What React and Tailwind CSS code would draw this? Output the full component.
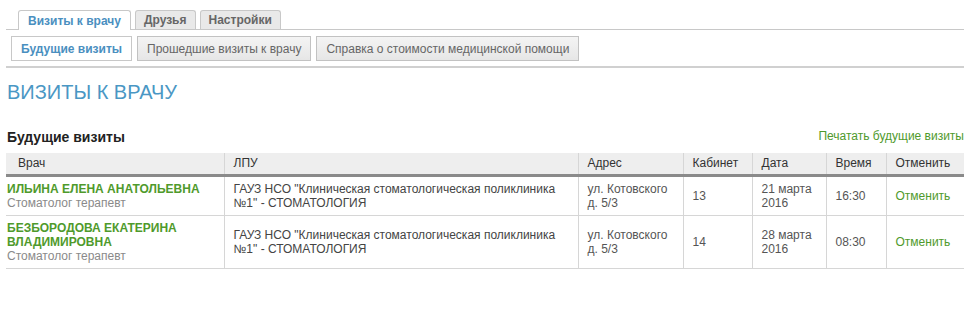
import React from "react";

const visits = [
  {
    doctor: "ИЛЬИНА ЕЛЕНА АНАТОЛЬЕВНА",
    spec: "Стоматолог терапевт",
    lpu: 'ГАУЗ НСО "Клиническая стоматологическая поликлиника №1" - СТОМАТОЛОГИЯ',
    address: "ул. Котовского д. 5/3",
    room: "13",
    date: "21 марта 2016",
    time: "16:30",
  },
  {
    doctor: "БЕЗБОРОДОВА ЕКАТЕРИНА ВЛАДИМИРОВНА",
    spec: "Стоматолог терапевт",
    lpu: 'ГАУЗ НСО "Клиническая стоматологическая поликлиника №1" - СТОМАТОЛОГИЯ',
    address: "ул. Котовского д. 5/3",
    room: "14",
    date: "28 марта 2016",
    time: "08:30",
  },
];

const tabs = [
  { label: "Визиты к врачу", active: true },
  { label: "Друзья" },
  { label: "Настройки" },
];

const subTabs = [
  { label: "Будущие визиты", active: true },
  { label: "Прошедшие визиты к врачу" },
  { label: "Справка о стоимости медицинской помощи" },
];

const th = "h-[22px] px-[9px] text-left font-normal text-[#333] border-l border-[#d6d6d6] first:border-l-0";
const td = "px-[9px] py-[5px] align-middle border-l border-[#d6d6d6] first:border-l-0";

export default function App() {
  return (
    <div
      className="min-h-[320px] bg-white px-[6px] pr-[5px] text-[12px] text-[#444]"
      style={{ fontFamily: '"Liberation Sans", Arial, sans-serif' }}
    >
      {/* верхние вкладки */}
      <div className="flex gap-[4px] border-b border-[#c8c8c8] pl-[12px] pt-[10px]">
        {tabs.map((t) =>
          t.active ? (
            <div
              key={t.label}
              className="-mb-px flex h-[20px] items-center rounded-t-[3px] border border-b-0 border-[#c8c8c8] bg-white px-[9px] font-bold text-[#4a8fbf]"
            >
              {t.label}
            </div>
          ) : (
            <div
              key={t.label}
              className="mb-0 flex h-[19px] items-center rounded-t-[3px] border border-b-0 border-[#c8c8c8] bg-[#e9e9e9] px-[8px] font-bold text-[#666]"
            >
              {t.label}
            </div>
          )
        )}
      </div>

      {/* подвкладки */}
      <div className="flex gap-[5px] border-b-2 border-[#d0d0d0] pb-[5px] pl-[5px] pt-[6px]">
        {subTabs.map((t) => (
          <div
            key={t.label}
            className={
              t.active
                ? "flex h-[25px] items-center border border-[#c8c8c8] bg-white px-[9px] font-bold text-[#4a8fbf]"
                : "flex h-[25px] items-center border border-[#c2c2c2] bg-gradient-to-b from-[#f4f4f4] to-[#e6e6e6] px-[9px] text-[#666]"
            }
          >
            {t.label}
          </div>
        ))}
      </div>

      <h1 className="mt-[12px] pl-[1px] text-[20px] leading-[24px] font-normal text-[#4a97c4]">
        ВИЗИТЫ К ВРАЧУ
      </h1>

      <div className="mt-[23px] flex items-end justify-between pl-[1px]">
        <h2 className="text-[14px] leading-[17px] font-bold text-[#222]">Будущие визиты</h2>
        <a href="#" className="mb-[1px] text-[12px] text-[#4f9a2c]">
          Печатать будущие визиты
        </a>
      </div>

      <table className="mt-[7px] w-[958px] table-fixed border-collapse">
        <colgroup>
          <col className="w-[218px]" />
          <col className="w-[354px]" />
          <col className="w-[105px]" />
          <col className="w-[69px]" />
          <col className="w-[74px]" />
          <col className="w-[60px]" />
          <col className="w-[78px]" />
        </colgroup>
        <thead>
          <tr className="border-b-[3px] border-[#8a8a8a] bg-[#eeeeee]">
            <th className={th + " pl-[12px]"}>Врач</th>
            <th className={th}>ЛПУ</th>
            <th className={th}>Адрес</th>
            <th className={th}>Кабинет</th>
            <th className={th}>Дата</th>
            <th className={th + " px-[8px]"}>Время</th>
            <th className={th}>Отменить</th>
          </tr>
        </thead>
        <tbody className="leading-[14px]">
          {visits.map((v) => (
            <tr key={v.doctor} className="border-b border-[#d6d6d6]">
              <td className={td + " pl-[1px]"}>
                <div className="font-bold text-[#4f9a2c]">{v.doctor}</div>
                <div className="text-[#8a8a8a]">{v.spec}</div>
              </td>
              <td className={td + " text-[#444]"}>{v.lpu}</td>
              <td className={td + " text-[#555]"}>{v.address}</td>
              <td className={td + " text-[#555]"}>{v.room}</td>
              <td className={td + " text-[#555]"}>{v.date}</td>
              <td className={td + " text-[#555]"}>{v.time}</td>
              <td className={td}>
                <a href="#" className="text-[#4f9a2c]">
                  Отменить
                </a>
              </td>
            </tr>
          ))}
        </tbody>
      </table>
    </div>
  );
}
